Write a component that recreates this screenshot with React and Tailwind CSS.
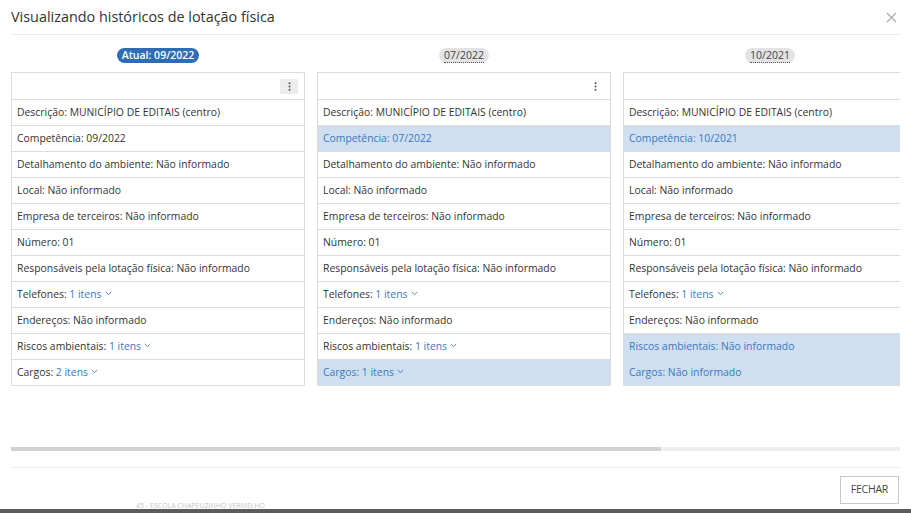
import React from "react";

const columns = [
  {
    badge: "Atual: 09/2022",
    current: true,
    rows: [
      { label: "Descrição", value: "MUNICÍPIO DE EDITAIS (centro)" },
      { label: "Competência", value: "09/2022" },
      { label: "Detalhamento do ambiente", value: "Não informado" },
      { label: "Local", value: "Não informado" },
      { label: "Empresa de terceiros", value: "Não informado" },
      { label: "Número", value: "01" },
      { label: "Responsáveis pela lotação física", value: "Não informado" },
      { label: "Telefones", value: "1 itens", link: true },
      { label: "Endereços", value: "Não informado" },
      { label: "Riscos ambientais", value: "1 itens", link: true },
      { label: "Cargos", value: "2 itens", link: true },
    ],
  },
  {
    badge: "07/2022",
    rows: [
      { label: "Descrição", value: "MUNICÍPIO DE EDITAIS (centro)" },
      { label: "Competência", value: "07/2022", changed: true },
      { label: "Detalhamento do ambiente", value: "Não informado" },
      { label: "Local", value: "Não informado" },
      { label: "Empresa de terceiros", value: "Não informado" },
      { label: "Número", value: "01" },
      { label: "Responsáveis pela lotação física", value: "Não informado" },
      { label: "Telefones", value: "1 itens", link: true },
      { label: "Endereços", value: "Não informado" },
      { label: "Riscos ambientais", value: "1 itens", link: true },
      { label: "Cargos", value: "1 itens", link: true, changed: true },
    ],
  },
  {
    badge: "10/2021",
    rows: [
      { label: "Descrição", value: "MUNICÍPIO DE EDITAIS (centro)" },
      { label: "Competência", value: "10/2021", changed: true },
      { label: "Detalhamento do ambiente", value: "Não informado" },
      { label: "Local", value: "Não informado" },
      { label: "Empresa de terceiros", value: "Não informado" },
      { label: "Número", value: "01" },
      { label: "Responsáveis pela lotação física", value: "Não informado" },
      { label: "Telefones", value: "1 itens", link: true },
      { label: "Endereços", value: "Não informado" },
      { label: "Riscos ambientais", value: "Não informado", changed: true },
      { label: "Cargos", value: "Não informado", changed: true },
    ],
  },
];

const Chevron = () => (
  <svg width="7" height="5" viewBox="0 0 7 5" className="inline-block ml-[3px] mb-[1px]">
    <path d="M0.8 1 L3.5 3.6 L6.2 1" fill="none" stroke="currentColor" strokeWidth="0.9" />
  </svg>
);

const Kebab = () => (
  <svg width="3" height="9" viewBox="0 0 3 9">
    <circle cx="1.5" cy="1.2" r="1" fill="#555" />
    <circle cx="1.5" cy="4.5" r="1" fill="#555" />
    <circle cx="1.5" cy="7.8" r="1" fill="#555" />
  </svg>
);

const HistoryColumn = ({ col }) => (
  <div className="w-[294px] shrink-0 flex flex-col">
    <div className="h-[37px] pt-[13px] flex justify-center">
      {col.current ? (
        <span className="h-[15px] px-[5px] rounded-full bg-[#2e6db4] text-white text-[10.5px] leading-[15px] font-semibold">
          {col.badge}
        </span>
      ) : (
        <span className="h-[15px] px-[5px] rounded-full bg-[#e3e3e3] text-[#444] text-[10.5px] leading-[15px]">
          <span className="border-b border-dotted border-[#555]">{col.badge}</span>
        </span>
      )}
    </div>
    <div className="border border-[#dcdcdc] bg-white">
      <div className="h-[26px] flex items-center justify-end pr-[6px]">
        <div
          className={`w-[18px] h-[15px] flex items-center justify-center ${
            col.current ? "bg-[#ececec]" : ""
          }`}
        >
          <Kebab />
        </div>
      </div>
      {col.rows.map((r) => (
        <div
          key={r.label}
          className={`h-[26px] border-t border-[#dcdcdc] px-[5px] flex items-center text-[10.4px] whitespace-nowrap ${
            r.changed ? "bg-[#cfdff0] text-[#3b78c0]" : "text-[#333]"
          }`}
        >
          <span>{r.label}:&nbsp;</span>
          {r.link ? (
            <span className="text-[#3b78c0] flex items-center">
              {r.value}
              <Chevron />
            </span>
          ) : (
            <span>{r.value}</span>
          )}
        </div>
      ))}
    </div>
  </div>
);

export default function App() {
  return (
    <div
      className="w-[911px] h-[513px] bg-white relative overflow-hidden flex flex-col"
      style={{ fontFamily: '"Open Sans", "Noto Sans", sans-serif' }}
    >
      <div className="h-[35px] mx-[11px] flex items-center justify-between border-b border-[#ededed]">
        <h1 className="text-[14.4px] text-[#333] font-normal">
          Visualizando históricos de lotação física
        </h1>
        <svg width="11" height="11" viewBox="0 0 11 11" className="mr-[3px] mt-[1px]">
          <path d="M1 1 L10 10 M10 1 L1 10" stroke="#b0b0b0" strokeWidth="1.4" />
        </svg>
      </div>

      <div className="mx-[11px] w-[889px] overflow-hidden">
        <div className="flex gap-[12px]">
          {columns.map((c) => (
            <HistoryColumn key={c.badge} col={c} />
          ))}
        </div>
      </div>

      <div className="mx-[11px] mt-[61px] h-[4px] bg-[#efefef] w-[889px]">
        <div className="h-[4px] w-[650px] bg-[#d2d2d2]" />
      </div>

      <div className="mx-[11px] mt-[16px] border-t border-[#ededed] flex justify-end pt-[8px] pr-[1px]">
        <button className="h-[28px] px-[10px] border border-[#c8c8c8] bg-white text-[10.5px] text-[#444] tracking-tight">
          FECHAR
        </button>
      </div>

      <div className="absolute left-[136px] bottom-[4px] text-[7px] leading-[7px] text-[#c4c4c4]">
        45 - ESCOLA CHAPEUZINHO VERMELHO
      </div>
      <div className="absolute left-0 right-0 bottom-0 h-[4px] bg-[#5c5c5c]" />
    </div>
  );
}
